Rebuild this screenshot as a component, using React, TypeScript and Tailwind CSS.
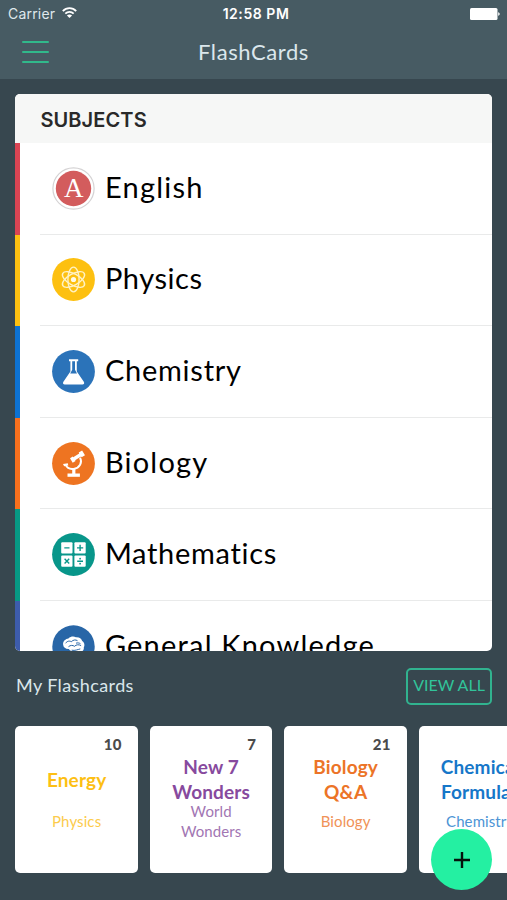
import type { ReactNode } from 'react';

type Subject = {
  name: string;
  bar: string;
  tracking: string;
  icon: ReactNode;
};

type Flashcard = {
  title: string[];
  subject: string[];
  count?: number;
  color: string;
  subColor: string;
};

function EnglishIcon() {
  return (
    <svg className="size-[43px]" viewBox="0 0 43 43">
      <circle cx="21.5" cy="21.5" r="20.6" fill="#fff" stroke="#d5d3d4" strokeWidth="1.2" />
      <circle cx="21.5" cy="21.5" r="17.7" fill="#d35c5d" />
      <text x="21.7" y="30.4" textAnchor="middle" fontSize="27" fill="#fff" fontFamily="'Liberation Serif', serif">A</text>
    </svg>
  );
}

function PhysicsIcon() {
  return (
    <svg className="size-[43px]" viewBox="0 0 43 43">
      <circle cx="21.5" cy="21.5" r="21.4" fill="#fdc010" />
      <g fill="none" stroke="#fff2c4" strokeWidth="1.4">
        <ellipse cx="21.5" cy="21.5" rx="5.6" ry="12.4" />
        <ellipse cx="21.5" cy="21.5" rx="5.6" ry="12.4" transform="rotate(60 21.5 21.5)" />
        <ellipse cx="21.5" cy="21.5" rx="5.6" ry="12.4" transform="rotate(120 21.5 21.5)" />
      </g>
      <circle cx="21.5" cy="21.5" r="2.6" fill="#fffbe8" />
    </svg>
  );
}

function ChemistryIcon() {
  return (
    <svg className="size-[43px]" viewBox="0 0 43 43">
      <circle cx="21.5" cy="21.5" r="21.4" fill="#2b73b9" />
      <path d="M17 9.2h9.2v2h-1.4v10.2l7 10.4c.9 1.5.2 2.7-1.4 2.7H12.8c-1.6 0-2.3-1.2-1.4-2.7l7-10.4V11.2H17z" fill="#fff" />
      <path d="M20.2 11.2h2.8v8.6l2 3.8h-6.8l2-3.8z" fill="#2b73b9" />
    </svg>
  );
}

function BiologyIcon() {
  return (
    <svg className="size-[43px]" viewBox="0 0 43 43">
      <circle cx="21.5" cy="21.5" r="21.4" fill="#ee7421" />
      <g fill="#fff">
        <path d="M18 16.3l2.8-1.7.4.6 6-3.7-.5-.9 3.4-2.1 2.9 4.7-3.4 2.1-.5-.8-6 3.7.5.9-2.9 1.7z" />
        <path d="M11 22l4.8-.7.5 2.2-4.2.8z" />
        <path d="M20.2 26.2h3.2v6h-3.2z" />
        <path d="M15.5 34.8v-3.3h12.4v3.3z" />
      </g>
      <path d="M13.4 22.7c1.5 3 4.6 4.8 8.3 4.2 6-.9 9-6.6 6.3-11.2" fill="none" stroke="#fff" strokeWidth="1.9" />
    </svg>
  );
}

function MathIcon() {
  return (
    <svg className="size-[43px]" viewBox="0 0 43 43">
      <circle cx="21.5" cy="21.5" r="21.4" fill="#08968a" />
      <g fill="#fff">
        <rect x="9.2" y="9.2" width="11.3" height="11.3" rx="1" />
        <rect x="22.4" y="9.2" width="11.3" height="11.3" rx="1" />
        <rect x="9.2" y="22.5" width="11.3" height="11.3" rx="1" />
        <rect x="22.4" y="22.5" width="11.3" height="11.3" rx="1" />
      </g>
      <g stroke="#08968a" strokeWidth="1.4">
        <path d="M12.3 14.9h5.2M25 14.9h6.2M28.1 11.8V18M12.6 25.8l4.6 4.6M17.2 25.8l-4.6 4.6M25.2 28.2H31" />
      </g>
      <circle cx="28.1" cy="25.7" r="0.9" fill="#08968a" />
      <circle cx="28.1" cy="30.7" r="0.9" fill="#08968a" />
    </svg>
  );
}

function BrainIcon() {
  return (
    <svg className="size-[43px]" viewBox="0 0 43 43">
      <circle cx="21.5" cy="21.5" r="21.2" fill="#2866a7" />
      <path d="M11.2 20c-.8-3.3 2-6.2 5.2-6.6 2.2-1.9 5.2-2.3 7.5-1.1 3.2-.4 5.6 1.3 6.3 3.7 2.2 1.4 2.8 4.1 1.6 6.2.4 2.5-1 4.3-3.3 4.5l-1.2 3.4-3-.4-1-3.2c-3 .4-5.2-.7-6.5-2.6-3 .2-5.3-1.3-5.6-3.9z" fill="#fff" />
      <path d="M13.5 18.3c2-2.6 4-2.5 5.8-1.6 2-2 4.3-2.2 6.2-1M16.5 21.7c2-1.7 4.3-1.6 6-.4 1.8-1.8 4.3-2 6.6-.7M24 18.2c1.5-.6 3-.3 4.4.4M19.6 25.2c3.5.7 6-.6 8.7-1.3" fill="none" stroke="#2866a7" strokeWidth="1" />
    </svg>
  );
}

const subjects: Subject[] = [
  { name: 'English', bar: 'bg-[#da4453]', tracking: 'tracking-[1.25px]', icon: <EnglishIcon /> },
  { name: 'Physics', bar: 'bg-[#fdc010]', tracking: 'tracking-[0.55px]', icon: <PhysicsIcon /> },
  { name: 'Chemistry', bar: 'bg-[#0d72d2]', tracking: 'tracking-[0.75px]', icon: <ChemistryIcon /> },
  { name: 'Biology', bar: 'bg-[#f8701d]', tracking: 'tracking-[1.2px]', icon: <BiologyIcon /> },
  { name: 'Mathematics', bar: 'bg-[#079984]', tracking: 'tracking-[0.7px]', icon: <MathIcon /> },
  { name: 'General Knowledge', bar: 'bg-[#3d5cac]', tracking: 'tracking-[1.2px]', icon: <BrainIcon /> },
];

const flashcards: Flashcard[] = [
  { title: ['Energy'], subject: ['Physics'], count: 10, color: 'text-[#fdbf14]', subColor: 'text-[#fccb4c]' },
  { title: ['New 7', 'Wonders'], subject: ['World', 'Wonders'], count: 7, color: 'text-[#874a9e]', subColor: 'text-[#a276b3]' },
  { title: ['Biology', 'Q&A'], subject: ['Biology'], count: 21, color: 'text-[#ec7427]', subColor: 'text-[#f09257]' },
  { title: ['Chemical', 'Formulas'], subject: ['Chemistry'], color: 'text-[#1677c9]', subColor: 'text-[#4b94d5]' },
];

function StatusBar() {
  return (
    <div className="grid h-[27px] grid-cols-3 items-center pl-2 pr-[7px] font-['Inter',sans-serif] text-[#dfe8ec]">
      <div className="flex items-center gap-[7px]">
        <span className="text-[14px] tracking-[0.2px]">Carrier</span>
        <svg className="mb-[2px] h-[11px] w-[15px]" viewBox="0 0 15 11" fill="none" stroke="#fff" strokeWidth="1.8">
          <path d="M.8 4.1c3.8-3.9 9.6-3.9 13.4 0M3.3 6.7c2.4-2.4 6-2.4 8.4 0" />
          <path d="M7.5 11L4.9 8.5c1.5-1.4 3.7-1.4 5.2 0z" fill="#fff" stroke="none" />
        </svg>
      </div>
      <span className="whitespace-nowrap pl-1 text-center text-[14px] font-semibold tracking-[0.55px] text-white">12:58 PM</span>
      <svg className="h-3 w-[30px] justify-self-end" viewBox="0 0 30 12" fill="#fff">
        <rect x="0" y="0" width="27.5" height="12" rx="1.5" />
        <path d="M28.2 4.2c2 .6 2 3 0 3.6z" />
      </svg>
    </div>
  );
}

function Header() {
  return (
    <header className="h-[79px] shrink-0 bg-[#475b63]">
      <StatusBar />
      <div className="grid h-[50px] grid-cols-3 items-center px-[22px]">
        <button aria-label="Menu" className="flex w-[27px] flex-col gap-2">
          <span className="h-[2px] rounded-full bg-[#31b98b]" />
          <span className="h-[2px] rounded-full bg-[#31b98b]" />
          <span className="h-[2px] rounded-full bg-[#31b98b]" />
        </button>
        <h1 className="text-center text-[22px] leading-7 tracking-[0.6px] text-[#dbe7ec]">FlashCards</h1>
      </div>
    </header>
  );
}

function SubjectRow({ subject }: { subject: Subject }) {
  return (
    <li className="flex h-[91.6px] shrink-0">
      <span className={`w-[5px] ${subject.bar}`} />
      <div className="ml-5 flex flex-1 items-center gap-[9.5px] border-b border-[#e9eaea] pl-3">
        {subject.icon}
        <span className={`whitespace-nowrap pb-[3px] text-[29px] leading-9 text-black ${subject.tracking}`}>{subject.name}</span>
      </div>
    </li>
  );
}

function Card({ card }: { card: Flashcard }) {
  return (
    <article className="flex h-[147px] w-[122.5px] shrink-0 flex-col rounded-[5px] bg-white pt-2 text-center">
      <div className="h-5 pr-4 text-right text-[15px] font-black leading-5 tracking-[0.4px] text-[#4b4b4b]">{card.count}</div>
      <h3 className={`flex h-[50px] flex-col justify-center text-[19px] font-bold leading-[25px] tracking-[0.15px] ${card.color}`}>
        {card.title.map((line) => <span key={line}>{line}</span>)}
      </h3>
      <p className={`flex h-[34px] flex-col justify-center text-[15px] leading-5 tracking-[0.1px] ${card.subColor}`}>
        {card.subject.map((line) => <span key={line}>{line}</span>)}
      </p>
    </article>
  );
}

export default function App() {
  return (
    <div className="relative flex h-[900px] w-[507px] flex-col overflow-hidden bg-[#37474f] font-['Lato',sans-serif]">
      <Header />

      {/* Subject list */}
      <section className="ml-[15.4px] mr-[15px] mt-[15px] flex h-[557px] shrink-0 flex-col overflow-hidden rounded-[5px] bg-white">
        <h2 className="flex h-[49px] shrink-0 items-center bg-[#f6f7f6] pl-[25px] pt-[3px] font-['Inter',sans-serif] text-[20px] font-semibold tracking-[0.1px] text-[#292929]">
          SUBJECTS
        </h2>
        <ul className="flex flex-col">
          {subjects.map((subject) => <SubjectRow key={subject.name} subject={subject} />)}
        </ul>
      </section>

      {/* My flashcards */}
      <section className="flex flex-col">
        <div className="flex h-[75px] items-start justify-between pl-4 pr-[15px] pt-[17px]">
          <h2 className="pt-1 text-[18px] leading-[26px] tracking-[0.4px] text-[#dae6eb]">My Flashcards</h2>
          <button className="h-[37px] w-[86px] whitespace-nowrap rounded-[5px] border-2 border-[#31b38f] pb-[3px] text-[16px] text-[#31c49a]">
            VIEW ALL
          </button>
        </div>
        <div className="flex gap-3 pl-[15.4px]">
          {flashcards.map((card) => <Card key={card.title[0]} card={card} />)}
        </div>
      </section>

      <button aria-label="Add flashcard" className="absolute bottom-[10px] right-[15px] flex size-[61px] items-center justify-center rounded-full bg-[#24f0a2]">
        <svg className="size-4" viewBox="0 0 16 16" stroke="#06120d" strokeWidth="2.4">
          <path d="M8 0v16M0 8h16" />
        </svg>
      </button>
    </div>
  );
}
